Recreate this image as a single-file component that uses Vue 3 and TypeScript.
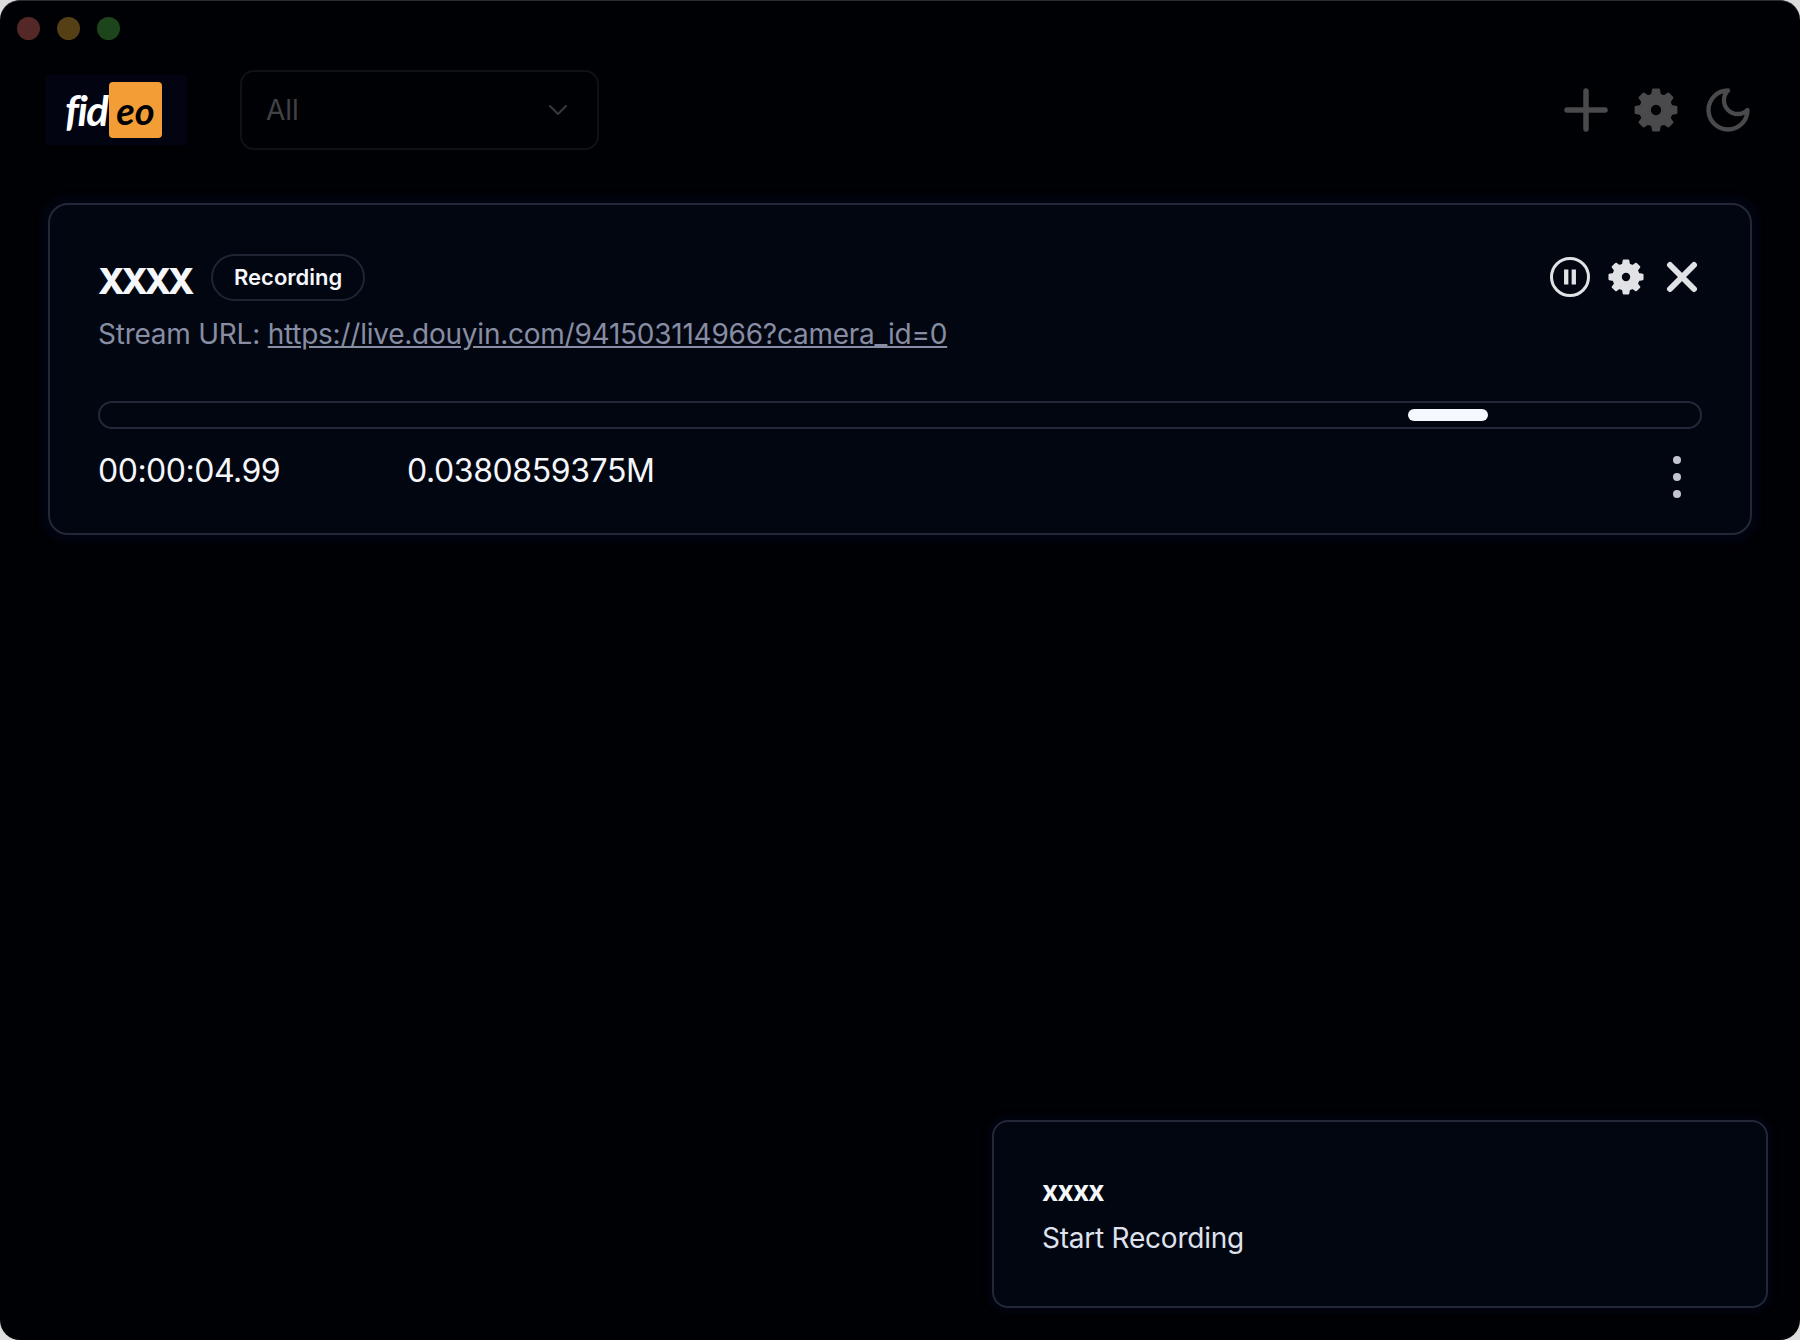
<script setup lang="ts">
import { computed, ref } from 'vue'

const task = ref({
  name: 'XXXX',
  status: 'Recording',
  url: 'https://live.douyin.com/941503114966?camera_id=0',
  time: '00:00:04.99',
  size: '0.0380859375M',
  barOffset: 1308
})

// 8 teeth gear, drawn around the centre of a 24 box
const gearPath = computed(() => {
  const points: string[] = []
  const teeth = 8
  for (let i = 0; i < teeth; i++) {
    const a = (i * Math.PI * 2) / teeth - Math.PI / 2
    const step = Math.PI / teeth
    const list: [number, number][] = [
      [8.6, a - step * 0.62],
      [11.2, a - step * 0.36],
      [11.2, a + step * 0.36],
      [8.6, a + step * 0.62]
    ]
    for (const [r, t] of list) {
      points.push(`${(12 + r * Math.cos(t)).toFixed(2)} ${(12 + r * Math.sin(t)).toFixed(2)}`)
    }
  }
  const hole = 'M12 8.6a3.4 3.4 0 1 0 0 6.8a3.4 3.4 0 1 0 0-6.8Z'
  return `M${points.join('L')}Z${hole}`
})
</script>

<template>
  <div class="window">
    <div class="titlebar">
      <span class="light red"></span>
      <span class="light yellow"></span>
      <span class="light green"></span>
    </div>

    <header class="header">
      <div class="logo">
        <span class="logo-fid">fid</span>
        <span class="logo-eo">eo</span>
      </div>
      <div class="select">
        <span>All</span>
        <svg class="chevron" viewBox="0 0 24 24" width="24" height="24" fill="none" stroke="currentColor" stroke-width="2.2" stroke-linecap="round" stroke-linejoin="round">
          <path d="M4 8l8 8 8-8" />
        </svg>
      </div>
      <div class="header-actions">
        <svg viewBox="0 0 44 44" width="44" height="44" fill="none" stroke="currentColor" stroke-width="5.5" stroke-linecap="round">
          <path d="M22 3v38M3 22h38" />
        </svg>
        <svg class="gear-big" viewBox="0 0 24 24" width="44" height="44" fill="currentColor" stroke="currentColor" stroke-width="1.2" stroke-linejoin="round">
          <path :d="gearPath" fill-rule="evenodd" />
        </svg>
        <svg class="moon" viewBox="0 0 24 24" width="52" height="52" fill="none" stroke="currentColor" stroke-width="2" stroke-linecap="round" stroke-linejoin="round">
          <path d="M12 3a6 6 0 0 0 9 9 9 9 0 1 1-9-9Z" />
        </svg>
      </div>
    </header>

    <main class="list">
      <section class="card">
        <div class="card-top">
          <h2 class="card-title">{{ task.name }}</h2>
          <span class="badge">{{ task.status }}</span>
          <div class="card-actions">
            <svg viewBox="0 0 42 42" width="42" height="42" fill="none" stroke="currentColor" stroke-width="3">
              <circle cx="21" cy="21" r="18.5" />
              <path d="M17.2 13.5v15M24.8 13.5v15" stroke-width="4.3" />
            </svg>
            <svg viewBox="0 0 24 24" width="36" height="36" fill="currentColor" stroke="currentColor" stroke-width="1.2" stroke-linejoin="round">
              <path :d="gearPath" fill-rule="evenodd" />
            </svg>
            <svg class="close" viewBox="0 0 32 32" width="32" height="32" fill="none" stroke="currentColor" stroke-width="6" stroke-linecap="round">
              <path d="M4 4l24 24M28 4L4 28" />
            </svg>
          </div>
        </div>

        <p class="stream">Stream URL: <a class="stream-link" :href="task.url">{{ task.url }}</a></p>

        <div class="progress">
          <span class="progress-bar" :style="{ marginLeft: task.barOffset + 'px' }"></span>
        </div>

        <div class="stats">
          <span class="stat-time">{{ task.time }}</span>
          <span class="stat-size">{{ task.size }}</span>
          <span class="more">
            <i></i><i></i><i></i>
          </span>
        </div>
      </section>
    </main>

    <div class="toast">
      <strong class="toast-title">xxxx</strong>
      <span class="toast-msg">Start Recording</span>
    </div>
  </div>
</template>

<style>
body {
  background: #dcdcdc;
}
</style>

<style scoped>
.window {
  position: relative;
  box-sizing: border-box;
  height: 1340px;
  border-radius: 20px;
  border-top: 1px solid #2b2d31;
  background: #000104;
  overflow: hidden;
  font-family: Inter, 'Liberation Sans', sans-serif;
  color: #f5f7fb;
}

.titlebar {
  display: flex;
  gap: 17px;
  height: 69px;
  padding: 16px 0 0 17px;
  box-sizing: border-box;
}

.light {
  width: 23px;
  height: 23px;
  border-radius: 50%;
}

.red { background: #532827; }
.yellow { background: #544014; }
.green { background: #1c451b; }

.header {
  display: flex;
  align-items: center;
  height: 80px;
  padding: 0 46px;
}

.logo {
  display: flex;
  align-items: center;
  box-sizing: border-box;
  width: 141px;
  height: 70px;
  padding-left: 19px;
  background: #020511;
}

.logo-fid {
  width: 44px;
  font-family: Lato, 'Liberation Sans', sans-serif;
  font-style: italic;
  font-weight: 700;
  font-size: 42px;
  line-height: 56px;
  letter-spacing: -1.5px;
  color: #fff;
}

.logo-eo {
  width: 53px;
  height: 56px;
  border-radius: 4px;
  background: #f29d35;
  color: #000;
  text-align: center;
  font-family: Lato, 'Liberation Sans', sans-serif;
  font-style: italic;
  font-weight: 700;
  font-size: 38px;
  line-height: 56px;
}

.select {
  display: flex;
  align-items: center;
  justify-content: space-between;
  box-sizing: border-box;
  width: 359px;
  height: 80px;
  margin-left: 53px;
  padding: 0 27px 0 24px;
  border: 2px solid #0f1116;
  border-radius: 14px;
  color: #404246;
  font-size: 28px;
}

.chevron {
  color: #35373b;
}

.header-actions {
  display: flex;
  align-items: center;
  gap: 26px;
  margin-left: auto;
  color: #4a4a4c;
}

.moon {
  margin-left: -2px;
}

.list {
  padding: 53px 48px 0;
}

.card {
  box-sizing: border-box;
  height: 332px;
  padding: 48px 48px 0;
  border: 2px solid #232838;
  border-radius: 20px;
  background: #020611;
  box-shadow: 0 0 4px 9px #01040e;
}

.card-top {
  display: flex;
  align-items: center;
  height: 48px;
}

.card-title {
  margin: 0;
  font-size: 35px;
  line-height: 48px;
  font-weight: 800;
  letter-spacing: -3.4px;
  transform: translateY(4px);
}

.badge {
  box-sizing: border-box;
  height: 47px;
  margin-left: 20px;
  padding: 0 21px;
  border: 2px solid #1f2433;
  border-radius: 24px;
  font-size: 22px;
  font-weight: 600;
  line-height: 43px;
}

.card-actions {
  display: flex;
  align-items: center;
  gap: 17px;
  margin-left: auto;
  margin-right: 4px;
  color: #e0e2e6;
}

.close {
  margin-left: 5px;
}

.stream {
  margin: 12px 0 0;
  font-size: 28px;
  line-height: 42px;
  letter-spacing: -0.24px;
  color: #878da2;
}

.stream-link {
  color: inherit;
  text-decoration: underline;
}

.progress {
  display: flex;
  align-items: center;
  box-sizing: border-box;
  height: 28px;
  margin-top: 46px;
  border: 2px solid #232838;
  border-radius: 14px;
}

.progress-bar {
  width: 80px;
  height: 12px;
  border-radius: 6px;
  background: #f5f8fe;
}

.stats {
  display: flex;
  align-items: center;
  height: 52px;
  margin-top: 15px;
  font-size: 32px;
}

.stat-time {
  width: 309px;
  letter-spacing: -0.5px;
}

.stat-size {
  letter-spacing: -0.4px;
}

.more {
  display: flex;
  flex-direction: column;
  gap: 9px;
  margin-left: auto;
  margin-right: 21px;
  transform: translateY(7px);
}

.more i {
  width: 8px;
  height: 8px;
  border-radius: 50%;
  background: #c3c6d1;
}

.toast {
  position: absolute;
  right: 32px;
  bottom: 32px;
  display: flex;
  flex-direction: column;
  gap: 5px;
  box-sizing: border-box;
  width: 776px;
  height: 188px;
  padding: 48px;
  border: 2px solid #232838;
  border-radius: 16px;
  background: #020611;
  box-shadow: 0 0 4px 6px #01040e;
}

.toast-title {
  font-size: 28px;
  line-height: 42px;
  font-weight: 700;
  letter-spacing: -0.8px;
}

.toast-msg {
  font-size: 28px;
  line-height: 42px;
  letter-spacing: -0.23px;
  color: #dfe2ec;
}
</style>
